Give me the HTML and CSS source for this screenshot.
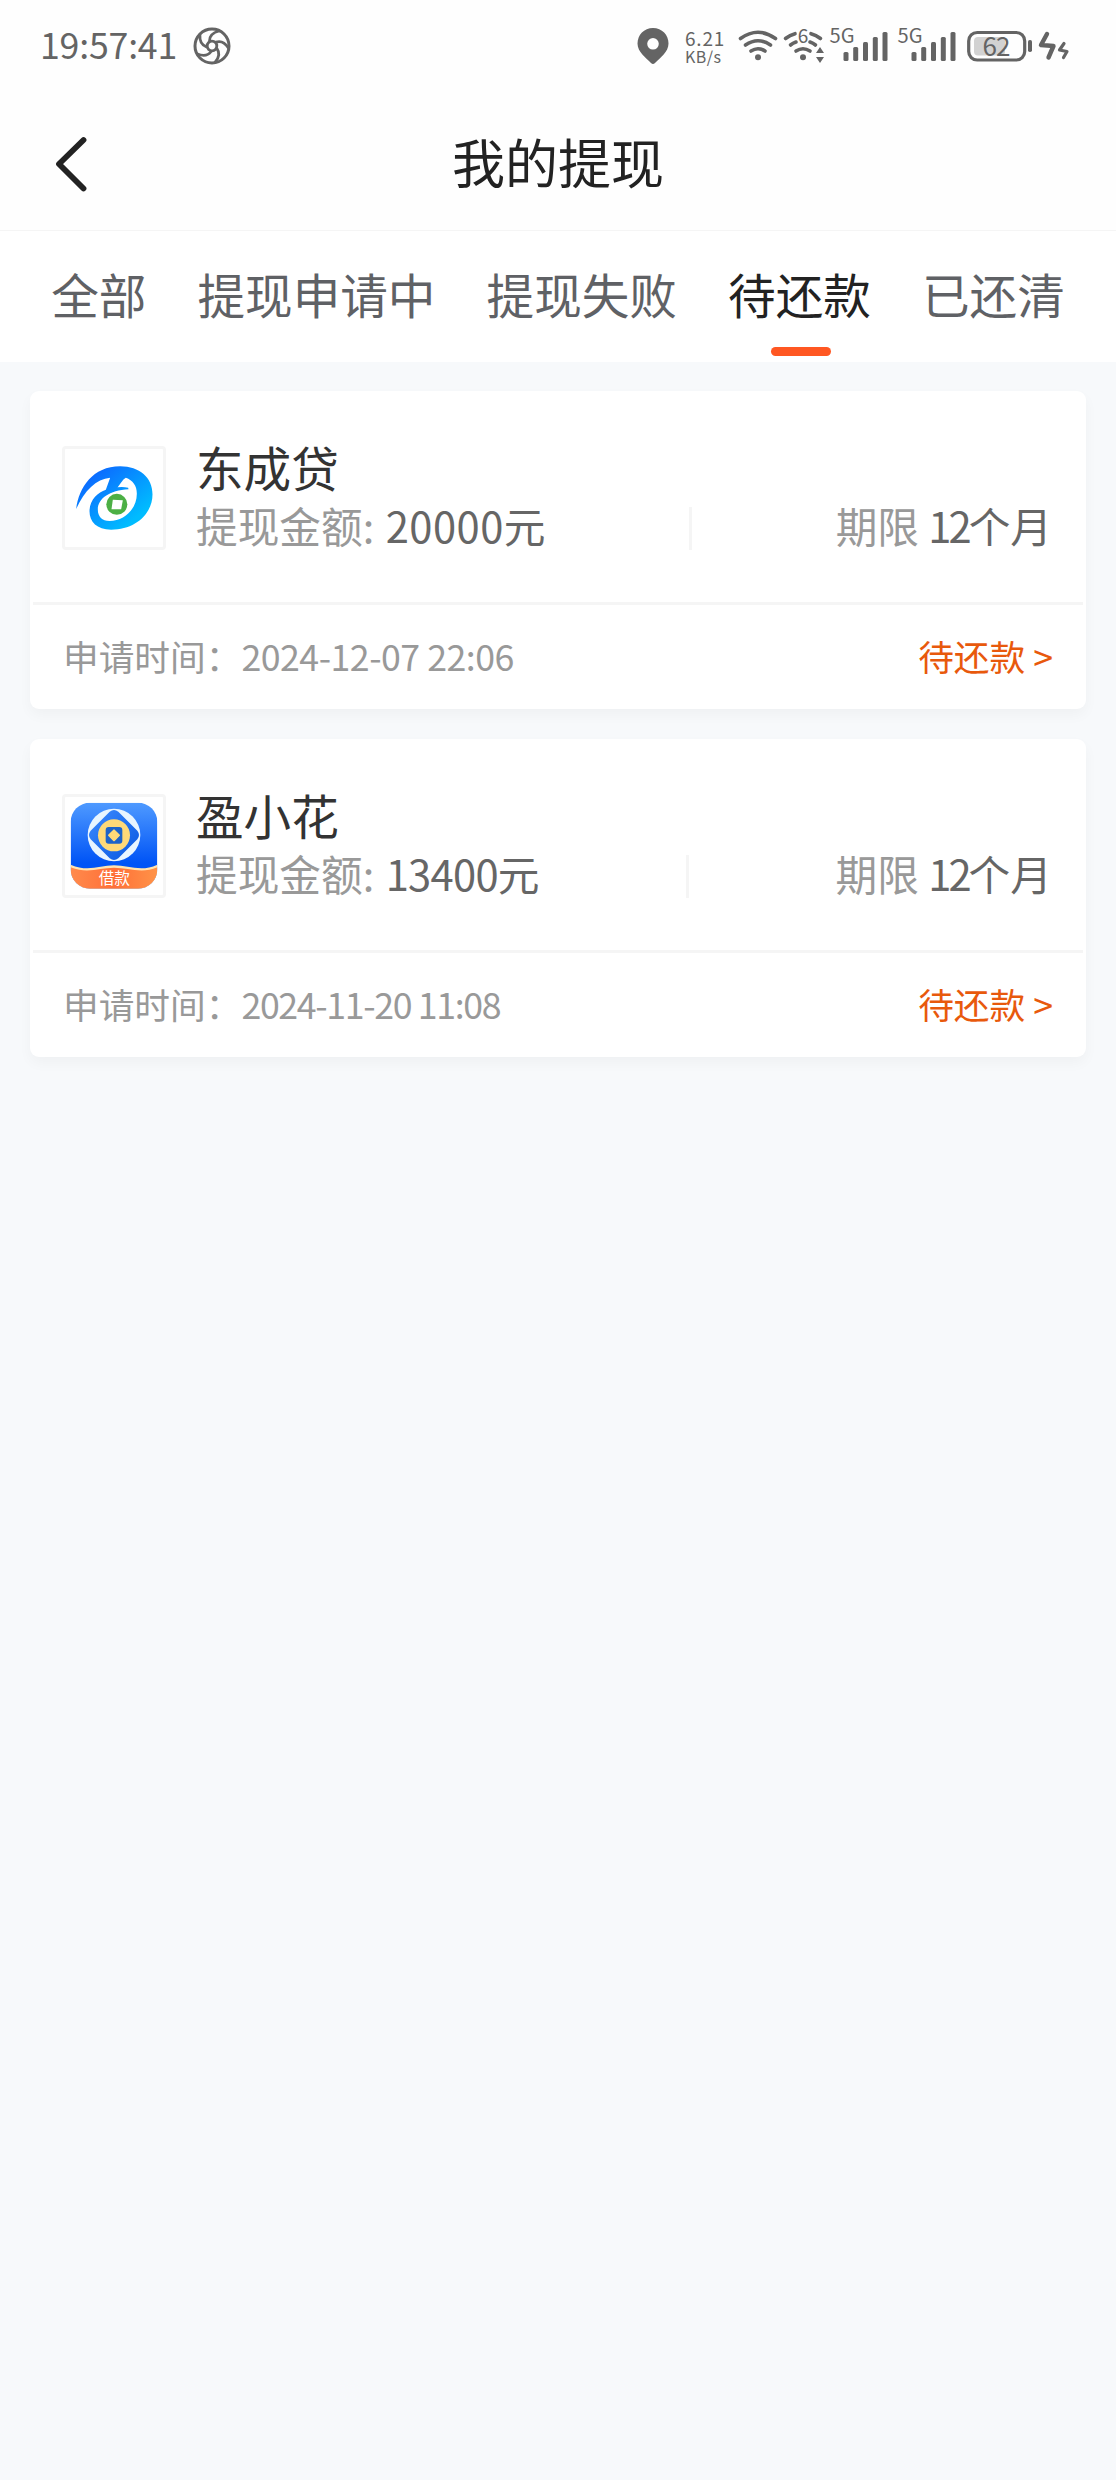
FILE: index.html
```html
<!DOCTYPE html>
<html lang="zh-CN">
<head>
<meta charset="utf-8">
<title>我的提现</title>
<link rel="stylesheet" href="styles.css">
</head>
<body>
<header class="statusbar">
  <div class="status-left">
    <span class="clock">19:57:41</span>
    <svg class="aperture" viewBox="-19 -19 38 38" width="38" height="38" fill="none" stroke="#646464" stroke-width="2.8">
      <circle r="17" stroke-width="3"/>
      <circle r="4.800"/>
      <g stroke-linecap="round">
        <path d="M-2.500 -5 C-2.500 -10 1 -13.500 7 -15"/>
        <path d="M-2.500 -5 C-2.500 -10 1 -13.500 7 -15" transform="rotate(72)"/>
        <path d="M-2.500 -5 C-2.500 -10 1 -13.500 7 -15" transform="rotate(144)"/>
        <path d="M-2.500 -5 C-2.500 -10 1 -13.500 7 -15" transform="rotate(216)"/>
        <path d="M-2.500 -5 C-2.500 -10 1 -13.500 7 -15" transform="rotate(288)"/>
      </g>
    </svg>
  </div>
  <div class="status-right">
    <svg class="pin" viewBox="636 26 34 40" width="34" height="40">
      <path fill="#646464" fill-rule="evenodd" d="M653 28C644 28 637.500 35 637.500 43.500C637.500 52 646 58 651 63Q653 65 655 63C660 58 668.500 52 668.500 43.500C668.500 35 662 28 653 28ZM653 38a5.800 5.800 0 1 1 0 11.600a5.800 5.800 0 1 1 0-11.600Z"/>
    </svg>
    <div class="speed"><span class="speed-value">6.21</span><span class="speed-unit">KB/s</span></div>
    <svg class="wifi" viewBox="736 26 44 40" width="44" height="40" fill="none" stroke="#646464" stroke-width="3.600" stroke-linecap="round">
      <path d="M740.500 38.500Q758 26 775.500 38.500M745.500 45Q758 36.500 770.500 45M751 51Q758 46.500 765 51"/>
      <circle cx="758" cy="57.200" r="3" fill="#646464" stroke="none"/>
    </svg>
    <svg class="wifi6" viewBox="780 26 46 40" width="46" height="40" fill="none" stroke="#646464" stroke-width="3.600" stroke-linecap="round">
      <path d="M785.500 38.500Q790 35 795 33.700M811 33.700Q816 35 820.500 38.500M790.500 45Q793 43 796 42M810 42Q813 43 815.500 45M796 51Q803 46.500 810 51"/>
      <circle cx="803" cy="57.200" r="3" fill="#646464" stroke="none"/>
      <path d="M820 47l4 6h-8zM820 63l4-6h-8z" fill="#646464" stroke="none"/>
      <text class="svg-text" x="803" y="43" font-size="19" stroke="none" text-anchor="middle">6</text>
    </svg>
    <svg class="cell" viewBox="829 16 60 50" width="60" height="50" fill="#646464">
      <text class="svg-text" x="829.500" y="43" font-size="19.500" textLength="25" lengthAdjust="spacingAndGlyphs">5G</text>
      <g>
        <rect x="843.500" y="52" width="5" height="9" rx="1.500"/><rect x="853.200" y="47" width="5" height="14" rx="1.500"/><rect x="863" y="42" width="5" height="19" rx="1.500"/><rect x="872.800" y="37" width="5" height="24" rx="1.500"/><rect x="882.500" y="32" width="5" height="29" rx="1.500"/>
      </g>
    </svg>
    <svg class="cell cell-second" viewBox="829 16 60 50" width="60" height="50" fill="#646464">
      <text class="svg-text" x="829.500" y="43" font-size="19.500" textLength="25" lengthAdjust="spacingAndGlyphs">5G</text>
      <g>
        <rect x="843.500" y="52" width="5" height="9" rx="1.500"/><rect x="853.200" y="47" width="5" height="14" rx="1.500"/><rect x="863" y="42" width="5" height="19" rx="1.500"/><rect x="872.800" y="37" width="5" height="24" rx="1.500"/><rect x="882.500" y="32" width="5" height="29" rx="1.500"/>
      </g>
    </svg>
    <svg class="battery" viewBox="966 26 68 40" width="68" height="40">
      <rect x="974" y="37" width="31" height="18.500" rx="4" fill="#d2d2d2"/>
      <rect x="968.700" y="32.500" width="56" height="27.500" rx="8.500" fill="none" stroke="#646464" stroke-width="3.200"/>
      <rect x="1028" y="40" width="4" height="12" rx="1.800" fill="#646464"/>
      <text class="svg-text" x="996.500" y="55.500" font-size="26" text-anchor="middle" textLength="28">62</text>
    </svg>
    <svg class="bolts" viewBox="1036 26 34 40" width="34" height="40" fill="none" stroke="#646464" stroke-linecap="round" stroke-linejoin="round">
      <path d="M1047 34L1041 45L1053.500 46L1048.500 57.500" stroke-width="4.400"/>
      <path d="M1064 43.500L1059.500 50L1067 51.500L1063.500 57.500" stroke-width="3.200"/>
    </svg>
  </div>
</header>
<nav class="navbar">
  <svg class="back" viewBox="0 0 32 56" width="32" height="56"><path d="M27.500 4L3 28L27.500 52.500" fill="none" stroke="#222" stroke-width="5.800" stroke-linecap="round" stroke-linejoin="round"/></svg>
  <h1 class="title">我的提现</h1>
</nav>
<div class="tabs">
  <span class="tab">全部</span>
  <span class="tab">提现申请中</span>
  <span class="tab">提现失败</span>
  <span class="tab tab-active">待还款</span>
  <span class="tab">已还清</span>
</div>
<main class="list">
  <article class="card">
    <div class="card-main">
      <div class="logo">
        <svg viewBox="46.500 56 294 294" width="98" height="98">
          <defs><linearGradient id="swirl" x1="0" y1="0" x2="1" y2="1"><stop offset=".15" stop-color="#0c68ff"/><stop offset=".8" stop-color="#00bcff"/></linearGradient></defs>
          <path fill="url(#swirl)" fill-rule="evenodd" d="M80 236C88 172 130 108 212 108C270 108 309 142 309 192C309 250 258 298 185 298C142 298 120 275 120 243C120 208 145 186 169 178L182 142C140 146 105 180 80 236ZM229 142C250 150 262 165 262 190C262 235 225 272 180 272C158 272 145 258 145 238C145 205 180 180 237 177L236 172Q220 169 204 171C212 163 217 149 229 142Z"/>
          <circle cx="202" cy="222" r="31.500" fill="#4caf45"/>
          <path d="M190 208L220 210L215 237L186 237Z" fill="#fff"/>
        </svg>
      </div>
      <div class="info">
        <h2 class="name">东成贷</h2>
        <div class="detail">
          <span class="amount"><span class="label">提现金额:</span> <span class="figure figure-wide">20000元</span></span>
          <span class="separator"></span>
          <span class="term"><span class="label">期限</span> <span class="months"><span class="count">12</span>个月</span></span>
        </div>
      </div>
    </div>
    <div class="card-foot">
      <span class="time">申请时间：<span class="date">2024-12-07 22:06</span></span>
      <span class="state">待还款 &gt;</span>
    </div>
  </article>
  <article class="card">
    <div class="card-main">
      <div class="logo">
        <svg viewBox="46 52 294 294" width="98" height="98">
          <defs>
            <linearGradient id="sky" x1="0" y1="0" x2="0" y2="1"><stop offset="0" stop-color="#4f9aff"/><stop offset=".7" stop-color="#0054f6"/></linearGradient>
            <linearGradient id="ribbon" x1="0" y1="0" x2="1" y2="0"><stop offset="0" stop-color="#ff8a4c"/><stop offset=".5" stop-color="#ff7038"/><stop offset="1" stop-color="#ff9348"/></linearGradient>
            <linearGradient id="petal" x1="0" y1="0" x2="1" y2="1"><stop offset="0" stop-color="#3d8bff"/><stop offset="1" stop-color="#0757e0"/></linearGradient>
            <clipPath id="tile"><rect x="63" y="69" width="260" height="258" rx="58"/></clipPath>
          </defs>
          <g clip-path="url(#tile)">
            <path d="M63 69H323V327H63Z" fill="url(#sky)"/>
            <path d="M63 255C115 278 150 257 193 257S275 278 323 255V327H63Z" fill="#ffe3b0"/>
            <path d="M63 263C115 283 150 264 193 264S275 283 323 263V327H63Z" fill="url(#ribbon)"/>
          </g>
          <circle cx="193" cy="166" r="79" fill="#e8f5ff"/>
          <path d="M180 96Q193 86 206 96Q235 125 263 153Q273 166 263 179Q235 207 206 236Q193 246 180 236Q151 207 123 179Q113 166 123 153Q151 125 180 96Z" fill="url(#petal)"/>
          <circle cx="193" cy="167" r="48" fill="#ffd978"/>
          <rect x="168" y="142" width="50" height="50" rx="9" fill="#1d63c9"/>
          <path d="M193 151L209 167L193 183L177 167Z" fill="#ffd978" stroke="#ffd978" stroke-width="4" stroke-linejoin="round"/>
          <text class="logo-text" x="194" y="314" font-size="47" text-anchor="middle">借款</text>
        </svg>
      </div>
      <div class="info">
        <h2 class="name">盈小花</h2>
        <div class="detail">
          <span class="amount"><span class="label">提现金额:</span> <span class="figure figure-narrow">13400元</span></span>
          <span class="separator"></span>
          <span class="term"><span class="label">期限</span> <span class="months"><span class="count">12</span>个月</span></span>
        </div>
      </div>
    </div>
    <div class="card-foot">
      <span class="time">申请时间：<span class="date date-narrow">2024-11-20 11:08</span></span>
      <span class="state">待还款 &gt;</span>
    </div>
  </article>
</main>
</body>
</html>
```
FILE: styles.css
```css
* { box-sizing: border-box; }
body {
  margin: 0;
  min-height: 2480px;
  background: #f7f9fb;
  font-family: "Noto Sans CJK SC", "Noto Sans", sans-serif;
  font-weight: 400;
  color: #333;
}
h1, h2 { margin: 0; font-weight: 400; }
svg { display: block; flex: none; overflow: visible; }

.statusbar {
  display: flex;
  justify-content: space-between;
  height: 92px;
  padding: 0 46px 0 40px;
  background: #fefefe;
  color: #646464;
}
.status-left, .status-right { display: flex; align-items: center; height: 92px; }
.clock { font-size: 35.7px; line-height: 88px; height: 92px; letter-spacing: -0.2px; width: 153px; white-space: nowrap; }
.speed { display: flex; flex-direction: column; width: 40px; margin: 0 11px 0 15px; }
.speed-value { font-size: 19px; line-height: 19px; letter-spacing: 0.8px; }
.speed-unit { font-size: 16px; line-height: 18px; letter-spacing: 0.5px; }
.wifi6 { margin-right: 3px; }
.cell { margin-top: -10px; }
.cell-second { margin-left: 8px; }
.battery { margin-left: 9px; }
.bolts { margin-left: 2px; }
.svg-text { fill: #646464; font-family: "Noto Sans CJK SC", sans-serif; }
.logo-text { fill: #fff; font-family: "Noto Sans CJK SC", sans-serif; }

.navbar {
  display: grid;
  grid-template-columns: 56px 32px 1fr 88px;
  align-items: center;
  height: 139px;
  border-bottom: 1px solid #f5f5f5;
  background: #fefefe;
}
.back { grid-column: 2; margin-top: 5px; }
.title { font-size: 53px; line-height: 80px; margin-top: -1px; text-align: center; color: #222; }

.tabs {
  display: flex;
  justify-content: space-evenly;
  height: 131px;
  background: #fff;
}
.tab {
  position: relative;
  font-size: 47.6px;
  line-height: 125px;
  color: #5f6165;
  white-space: nowrap;
}
.tab-active { color: #222; }
.tab-active::after {
  content: "";
  position: absolute;
  left: calc(50% - 28px);
  top: 116px;
  width: 60px;
  height: 9px;
  border-radius: 4.5px;
  background: #ff5722;
}

.list { display: flex; flex-direction: column; gap: 30px; padding: 29px 30px; }
.card {
  height: 318px;
  border-radius: 9px;
  background: #fff;
  box-shadow: 0 6px 14px rgba(0, 0, 0, 0.035);
}
.card-main {
  display: flex;
  height: 214px;
  margin: 0 3px;
  padding: 0 31px 0 29px;
  border-bottom: 3px solid #f5f5f5;
}
.logo {
  flex: none;
  width: 104px;
  height: 104px;
  margin: 55px 30px 0 0;
  border: 3px solid #f5f5f5;
  border-radius: 4px;
}
.info { flex: 1; padding-top: 48px; }
.name { font-size: 47.6px; line-height: 56px; color: #333; }
.detail {
  display: flex;
  align-items: center;
  justify-content: space-between;
  height: 61px;
  font-size: 41.7px;
  line-height: 61px;
  white-space: nowrap;
}
.label { color: #999; }
.figure, .months { color: #666; }
.figure { margin-left: 2px; }
.figure-wide { letter-spacing: 0.5px; }
.figure-narrow { letter-spacing: -0.7px; }
.count { letter-spacing: -3px; }
.separator { width: 3px; height: 43px; margin-top: 5px; background: #f5f5f5; }
.card-foot {
  display: flex;
  justify-content: space-between;
  padding: 0 33px;
  font-size: 35.7px;
  line-height: 101px;
  white-space: nowrap;
}
.time { color: #999; }
.date { letter-spacing: -0.5px; }
.date-narrow { letter-spacing: -1.35px; }
.state { color: #e8590c; }
```
